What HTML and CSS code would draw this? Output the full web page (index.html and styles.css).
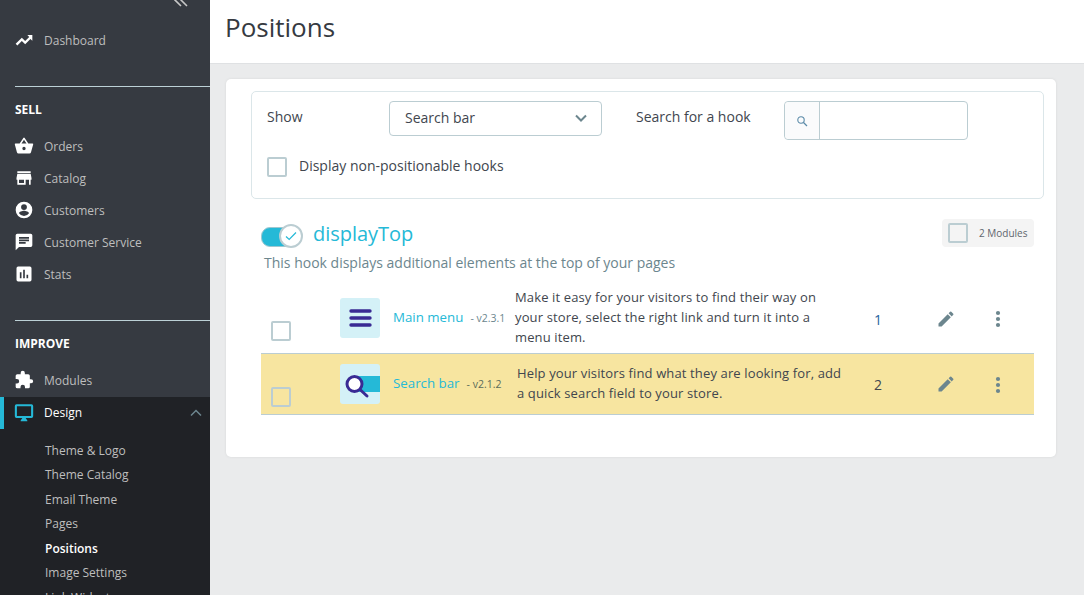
FILE: index.html
```html
<!DOCTYPE html>
<html lang="en">
<head>
<meta charset="utf-8">
<title>Positions</title>
<link rel="stylesheet" href="styles.css">
</head>
<body>
<div class="app">
  <nav class="sidebar">
    <div class="collapse"><svg width="14" height="14" viewBox="0 0 14 14"><path d="M7 1 1 7l6 6M13 1 7 7l6 6" fill="none" stroke="#c8c8c8" stroke-width="1.600"/></svg></div>
    <a class="item dash"><svg class="ico" viewBox="0 0 24 24"><path d="M16 6l2.300 2.300-4.900 4.900-4-4L2 16.600 4 18.600l5.400-5.400 4 4 6.300-6.300L22 13V6z" fill="#fff"/></svg><span>Dashboard</span></a>
    <div class="tab-title">SELL</div>
    <a class="item"><svg class="ico" viewBox="0 0 24 24"><path d="M17.200 9 12.800 2.400a1 1 0 0 0-1.600 0L6.800 9H2a1 1 0 0 0-1 1.300l2.500 9.200A2 2 0 0 0 5.500 21h13a2 2 0 0 0 1.900-1.500l2.600-9.200A1 1 0 0 0 22 9zM9 9l3-4.400L15 9zm3 8a2 2 0 1 1 0-4 2 2 0 0 1 0 4z" fill="#fff"/></svg><span>Orders</span></a>
    <a class="item"><svg class="ico" viewBox="0 0 24 24"><path d="M20 4H4v2h16zm1 10v-2l-1-5H4l-1 5v2h1v6h10v-6h4v6h2v-6zm-9 4H6v-4h6z" fill="#fff"/></svg><span>Catalog</span></a>
    <a class="item"><svg class="ico" viewBox="0 0 24 24"><path d="M12 2a10 10 0 1 0 0 20 10 10 0 0 0 0-20zm0 3a3.500 3.500 0 1 1 0 7 3.500 3.500 0 0 1 0-7zm0 14.200a7.200 7.200 0 0 1-6-3.200c0-2 4-3.100 6-3.100s6 1.100 6 3.100a7.200 7.200 0 0 1-6 3.200z" fill="#fff"/></svg><span>Customers</span></a>
    <a class="item"><svg class="ico" viewBox="0 0 24 24"><path d="M20 2H4a2 2 0 0 0-2 2v18l4-4h14a2 2 0 0 0 2-2V4a2 2 0 0 0-2-2zM6 9h12v2H6zm8 5H6v-2h8zm4-6H6V6h12z" fill="#fff"/></svg><span>Customer Service</span></a>
    <a class="item"><svg class="ico" viewBox="0 0 24 24"><path d="M19 3H5a2 2 0 0 0-2 2v14a2 2 0 0 0 2 2h14a2 2 0 0 0 2-2V5a2 2 0 0 0-2-2zM9 17H7v-7h2zm4 0h-2V7h2zm4 0h-2v-4h2z" fill="#fff"/></svg><span>Stats</span></a>
    <div class="tab-title second">IMPROVE</div>
    <a class="item"><svg class="ico" viewBox="0 0 24 24"><path d="M20.500 11H19V7a2 2 0 0 0-2-2h-4V3.500a2.500 2.500 0 0 0-5 0V5H4a2 2 0 0 0-2 2v3.800h1.500a2.700 2.700 0 0 1 0 5.400H2V20a2 2 0 0 0 2 2h3.800v-1.500a2.700 2.700 0 0 1 5.400 0V22H17a2 2 0 0 0 2-2v-4h1.500a2.500 2.500 0 0 0 0-5z" fill="#fff"/></svg><span>Modules</span></a>
    <div class="group">
      <a class="item active"><svg class="ico" viewBox="0 0 24 24"><path d="M21 1.500H3A2 2 0 0 0 1 3.500V16a2 2 0 0 0 2 2h7l-2 3v1h8v-1l-2-3h7a2 2 0 0 0 2-2V3.500a2 2 0 0 0-2-2zm-.500 14H3.500V4h17z" fill="#25b9d7"/></svg><span>Design</span><svg class="up" viewBox="0 0 12 8"><path d="M1 6.500 6 1.500l5 5" fill="none" stroke="#6c868e" stroke-width="1.500"/></svg></a>
      <ul class="sub">
        <li>Theme &amp; Logo</li>
        <li>Theme Catalog</li>
        <li>Email Theme</li>
        <li>Pages</li>
        <li class="current">Positions</li>
        <li>Image Settings</li>
        <li>Link Widget</li>
      </ul>
    </div>
  </nav>
  <main class="main">
    <header class="head"><h1>Positions</h1></header>
    <div class="content">
      <section class="card">
        <div class="filters">
          <div class="f-row">
            <label class="f-show">Show</label>
            <div class="select"><span>Search bar</span><svg width="12" height="8" viewBox="0 0 12 8"><path d="M1 1.500l5 5 5-5" fill="none" stroke="#6c868e" stroke-width="2"/></svg></div>
            <label class="f-search">Search for a hook</label>
            <div class="search"><span class="addon"><svg width="12" height="12" viewBox="0 0 12 12"><circle cx="5" cy="5" r="3.200" fill="none" stroke="#5a8aa8" stroke-width="1.100"/><path d="M7.500 7.500 11 11" stroke="#5a8aa8" stroke-width="1.300"/></svg></span></div>
          </div>
          <div class="f-check"><span class="box"></span><span class="f-label">Display non-positionable hooks</span></div>
        </div>
        <div class="hook">
          <div class="hook-head">
            <span class="switch"><span class="knob"><svg width="12" height="10" viewBox="0 0 12 10"><path d="M1 5.500 4.200 8.500 11 1.500" fill="none" stroke="#25b9d7" stroke-width="1.200"/></svg></span></span>
            <h2>displayTop</h2>
            <div class="count"><span class="box"></span><span>2 Modules</span></div>
          </div>
          <p class="hook-desc">This hook displays additional elements at the top of your pages</p>
          <div class="row r1">
            <span class="box"></span>
            <span class="thumb"><svg width="40" height="40" viewBox="0 0 40 40"><path d="M11 13h19M11 20h19M11 27h19" stroke="#392a94" stroke-width="3.400" stroke-linecap="round"/></svg></span>
            <div class="name"><a>Main menu</a><small>- v2.3.1</small></div>
            <div class="desc">Make it easy for your visitors to find their way on your store, select the right link and turn it into a menu item.</div>
            <div class="num">1</div>
            <svg class="pen" viewBox="0 0 24 24"><path d="M3 17.250V21h3.750L17.800 9.940l-3.750-3.750zM20.700 7.040a1 1 0 0 0 0-1.410l-2.340-2.340a1 1 0 0 0-1.410 0l-1.830 1.830 3.750 3.750z" fill="#6c868e"/></svg>
            <svg class="dots" viewBox="0 0 6 18"><circle cx="3" cy="3" r="2.100"/><circle cx="3" cy="9" r="2.100"/><circle cx="3" cy="15" r="2.100"/></svg>
          </div>
          <div class="row r2">
            <span class="box"></span>
            <span class="thumb"><svg width="40" height="40" viewBox="0 0 40 40"><rect x="14" y="12" width="26" height="16" fill="#25b9d7"/><circle cx="14.500" cy="20" r="7.500" fill="#fff" stroke="#392a94" stroke-width="3"/><path d="M20.500 26 27 32" stroke="#392a94" stroke-width="3" stroke-linecap="round"/></svg></span>
            <div class="name"><a>Search bar</a><small>- v2.1.2</small></div>
            <div class="desc">Help your visitors find what they are looking for, add a quick search field to your store.</div>
            <div class="num">2</div>
            <svg class="pen" viewBox="0 0 24 24"><path d="M3 17.250V21h3.750L17.800 9.940l-3.750-3.750zM20.700 7.040a1 1 0 0 0 0-1.410l-2.340-2.340a1 1 0 0 0-1.410 0l-1.830 1.830 3.750 3.750z" fill="#6c868e"/></svg>
            <svg class="dots" viewBox="0 0 6 18"><circle cx="3" cy="3" r="2.100"/><circle cx="3" cy="9" r="2.100"/><circle cx="3" cy="15" r="2.100"/></svg>
          </div>
        </div>
      </section>
    </div>
  </main>
</div>
</body>
</html>
```
FILE: styles.css
```css
* { box-sizing: border-box; }
html, body { margin: 0; height: 100%; overflow: hidden; }
body { font-family: "Open Sans", sans-serif; font-size: 14px; color: #41464e; background: #eaebec; }
.app { display: flex; height: 595px; }

.sidebar { width: 210px; flex: none; background: #363a41; overflow: hidden; }
.collapse { height: 7px; display: flex; justify-content: flex-end; align-items: flex-end; padding-right: 22px; }
.item { display: flex; align-items: center; height: 32px; padding-left: 15px; color: #bebebe; font-size: 12px; position: relative; }
.item.dash { margin-top: 17px; }
.ico { width: 20px; height: 20px; margin-right: 9px; flex: none; margin-left: -1px; }
.item span { margin-left: 1px; }
.tab-title { margin: 30px 0 0 15px; padding-top: 14px; border-top: 1px solid #bcd0d6; color: #fff; font-size: 12px; font-weight: 700; line-height: 17px; height: 44px; }
.group { background: #202226; margin-top: 1px; padding-bottom: 20px; }
.item.active { color: #fff; box-shadow: inset 4px 0 0 #25b9d7; padding-bottom: 1px; }
.up { width: 12px; height: 8px; margin-left: auto; margin-right: 8px; }
.sub { list-style: none; margin: 0; padding: 9.600px 0 0 45px; }
.sub li { height: 24.500px; line-height: 24.500px; font-size: 12px; color: #bebebe; }
.sub li.current { color: #fff; font-weight: 600; }

.main { flex: 1; min-width: 0; display: flex; flex-direction: column; }
.head { height: 64px; background: #fff; border-bottom: 1px solid #dfe1e3; padding: 9px 0 0 15px; flex: none; }
.head h1 { margin: 0; font-size: 26px; font-weight: 400; line-height: 36px; color: #363a41; }
.content { padding: 15px 28px 0 16px; }
.card { height: 378px; background: #fff; border-radius: 5px; box-shadow: 0 0 3px rgba(0,0,0,.08); padding: 12px 12px 0 25px; }

.filters { height: 108px; border: 1px solid #dbe6e9; border-radius: 5px; padding: 9px 15px 0; }
.f-row { display: flex; align-items: flex-start; }
.f-show { width: 122px; line-height: 31px; font-size: 14px; }
.select { width: 213px; height: 35px; border: 1px solid #bbcdd2; border-radius: 4px; display: flex; align-items: center; justify-content: space-between; padding: 0 14px 2px 15px; }
.f-search { margin-left: 34px; width: 148px; line-height: 31px; white-space: nowrap; }
.search { width: 184px; height: 39px; border: 1px solid #bbcdd2; border-radius: 4px; display: flex; }
.addon { width: 35px; background: #fafbfc; border-right: 1px solid #bbcdd2; display: flex; align-items: center; justify-content: center; border-radius: 4px 0 0 4px; }
.f-check { display: flex; align-items: center; gap: 12px; margin-top: 17px; }
.f-label { line-height: 20px; margin-top: -3px; }
.box { display: block; width: 20px; height: 20px; border: 2px solid #bbcdd2; border-radius: 2px; flex: none; }

.hook { padding: 0 10px; }
.hook-head { display: flex; align-items: center; height: 42px; margin-top: 14px; }
.switch { position: relative; width: 42px; height: 24px; flex: none; margin-top: 4px; }
.switch::before { content: ""; position: absolute; left: 0; top: 3px; width: 38px; height: 18px; background: #25b9d7; border-radius: 9px; border: 1px solid #9fc7d0; }
.knob { position: absolute; right: 0; top: 0; width: 24px; height: 24px; background: #fff; border: 2px solid #bbcdd2; border-radius: 50%; display: flex; align-items: center; justify-content: center; }
.hook-head h2 { margin: 0 0 0 10px; font-size: 20px; font-weight: 400; color: #25b9d7; line-height: 28px; letter-spacing: -.03px; }
.count { margin-left: auto; width: 92px; height: 28px; margin-top: -2px; background: #f4f4f4; border-radius: 4px; display: flex; align-items: center; gap: 11px; padding-left: 6px; font-size: 10px; color: #5f666d; }
.count .box { background: #f4f4f4; }
.hook-desc { margin: -2px 0 0 3px; line-height: 20px; font-size: 14px; color: #6c868e; }
.row { display: flex; position: relative; border-bottom: 1px solid #bbcdd2; align-items: center; }
.r1 { height: 69px; margin-top: 12px; }
.r2 { height: 61px; background: #f7e5a0; }
.row > .box { margin: 0 49px 0 10px; align-self: flex-end; }
.r1 > .box { margin-bottom: 12px; }
.r2 > .box { margin-bottom: 7px; }
.thumb { width: 40px; height: 40px; background: #d4f1f7; border-radius: 3px; flex: none; overflow: hidden; margin-right: 13px; }
.r1 .thumb { margin-top: -2px; }
.thumb svg { display: block; }
.name { flex: none; white-space: nowrap; }
.name a { color: #25b9d7; font-size: 13.300px; }
.name small { font-size: 10.500px; color: #6c868e; margin-left: 7px; }
.r1 .name { width: 122px; margin-top: -6px; }
.r2 .name { width: 124px; margin-top: -3px; }
.r2 .name small { margin-left: 7px; color: #5b6b5a; }
.desc { flex: none; font-size: 13px; line-height: 20px; color: #41464e; letter-spacing: .13px; }
.r1 .desc { width: 320px; margin-top: -4px; }
.r2 .desc { width: 328px; margin-top: -2px; }
.num { width: 50px; flex: none; font-size: 14px; }
.r1 .num { color: #25639e; margin-left: 39px; }
.r2 .num { margin-left: 29px; margin-top: 1px; }
.pen { width: 20px; height: 20px; margin: 0 0 0 12px; flex: none; }
.dots { width: 6px; height: 18px; margin-left: 39px; fill: #6c868e; flex: none; }
.r2 .dots { margin-top: 1px; }
```
